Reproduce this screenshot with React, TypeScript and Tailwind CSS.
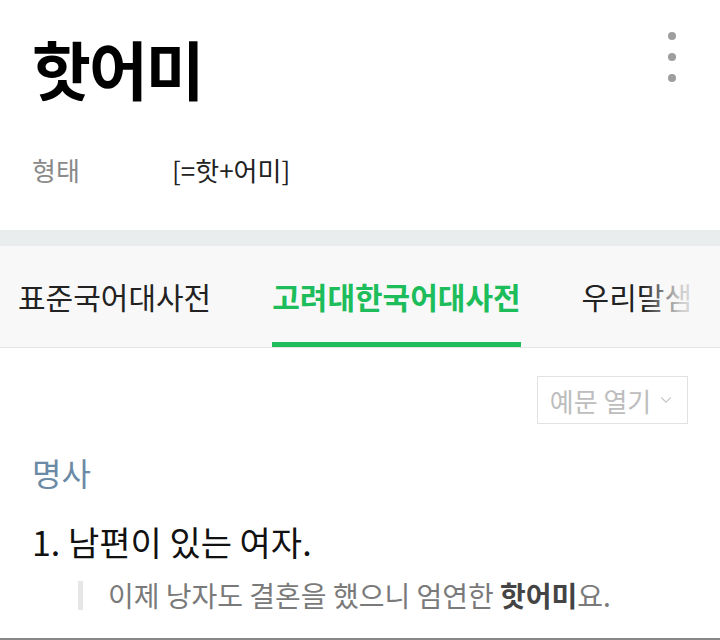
import { ChevronDown } from 'lucide-react'

const font = { fontFamily: '"Noto Sans CJK KR", "Noto Sans", sans-serif' }

export default function App() {
  return (
    <div className="w-[720px] h-[640px] bg-white overflow-hidden flex flex-col" style={font}>
      {/* Header */}
      <section className="h-[230px] px-[32px] pt-[27px] relative">
        <h1 className="text-[64px] leading-[80px] font-bold text-black tracking-[-2px]">핫어미</h1>
        <div className="absolute right-[44px] top-[32px] flex flex-col gap-[13px]">
          <span className="w-[8px] h-[8px] rounded-full bg-[#9e9e9e]" />
          <span className="w-[8px] h-[8px] rounded-full bg-[#9e9e9e]" />
          <span className="w-[8px] h-[8px] rounded-full bg-[#9e9e9e]" />
        </div>
        <div className="mt-[45px] flex items-center text-[26px] leading-[36px]">
          <span className="w-[140px] text-[#8a8a8a]">형태</span>
          <span className="text-[#222]">[=핫+어미]</span>
        </div>
      </section>

      <div className="h-[16px] bg-[#e9eded]" />

      {/* Tabs */}
      <nav className="h-[102px] bg-[#f8f8f8] border-b border-[#e4e4e4] flex items-stretch pl-[18px] gap-[61px] relative overflow-hidden whitespace-nowrap">
        <div className="flex items-center text-[30px] text-[#222]">표준국어대사전</div>
        <div className="relative flex items-center text-[30px] font-bold text-[#1cbd5a]">
          고려대한국어대사전
          <span className="absolute left-0 right-0 bottom-0 h-[5px] bg-[#1cbd5a]" />
        </div>
        <div className="flex items-center text-[30px] text-[#222]">우리말샘</div>
        <div className="absolute right-0 top-0 bottom-0 w-[78px] bg-gradient-to-r from-[#f8f8f8]/0 via-[#f8f8f8]/80 to-[#f8f8f8]" />
      </nav>

      {/* Content */}
      <main className="flex-1 px-[32px] flex flex-col border-b-2 border-[#888]">
        <div className="flex justify-end pt-[28px]">
          <button className="w-[151px] h-[48px] border border-[#e2e2e2] flex items-center justify-center gap-[6px] text-[26px] text-[#bdbdbd]">
            예문 열기
            <ChevronDown size={18} strokeWidth={1.5} className="text-[#c8c8c8]" />
          </button>
        </div>
        <div className="mt-[28px] text-[32px] leading-[40px] text-[#6b8aa5]">명사</div>
        <div className="mt-[28px] text-[34px] leading-[44px] text-[#111]">1. 남편이 있는 여자.</div>
        <div className="mt-[12px] flex items-center">
          <span className="ml-[46px] w-[5px] h-[29px] bg-[#e6e6e6]" />
          <span className="ml-[25px] text-[28px] leading-[38px] text-[#7a7a7a]">
            이제 낭자도 결혼을 했으니 엄연한 <b className="text-[#444]">핫어미</b>요.
          </span>
        </div>
      </main>
    </div>
  )
}
